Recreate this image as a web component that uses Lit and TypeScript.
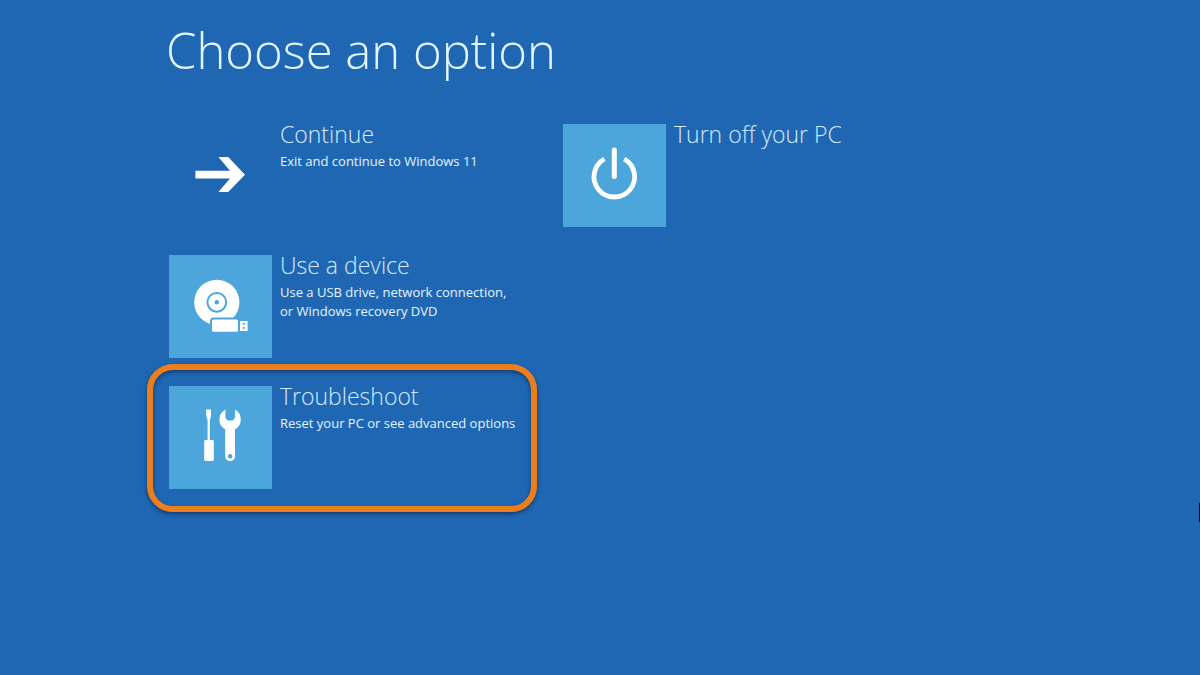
import { LitElement, html, css, svg, nothing, TemplateResult } from "lit";
import { customElement, property, state } from "lit/decorators.js";
import { classMap } from "lit/directives/class-map.js";

const icons: Record<string, TemplateResult> = {
  arrow: svg`<path fill="#fff" d="M26.4 46.8H61L49.4 33H59.2L76 50.7L59.2 68H49.4L61 54.4H26.4Z"/>`,
  power: svg`
    <path fill="none" stroke="#fff" stroke-width="4.8" stroke-linecap="butt"
      d="M41.4 35A20.3 20.3 0 1 0 61.2 35"/>
    <path fill="none" stroke="#fff" stroke-width="5" stroke-linecap="round" d="M51.3 26V52.4"/>`,
  device: svg`
    <circle cx="47.8" cy="47.3" r="22.6" fill="#fff"/>
    <circle cx="47.8" cy="47.3" r="9.4" fill="none" stroke="#4ca6dc" stroke-width="2"/>
    <circle cx="47.8" cy="47.3" r="2.2" fill="#4ca6dc"/>
    <path fill="#4ca6dc" d="M41 78V66.4Q41 62.6 44.8 62.6H76V78Z"/>
    <rect x="43" y="64.6" width="26" height="12.2" rx="1.6" fill="#fff"/>
    <path fill="#fff" fill-rule="evenodd" d="M71 66H78.6V76H71ZM73.6 68.2V69.8H76V68.2ZM73.6 72.2V73.8H76V72.2Z"/>`,
  tools: svg`
    <path fill="#fff" d="M37.2 23.4H42V30L40.8 34.2V54H43.4Q44.8 54 44.8 55.4V73.6Q44.8 75 43.4 75H36.6Q35.2 75 35.2 73.6V55.4Q35.2 54 36.6 54H38.6V34.2L37.2 30Z"/>
    <path fill="#fff" fill-rule="evenodd" d="M56.4 23.6Q50.4 27 50.4 33.6Q50.4 40.6 56.2 43.2V70.3A4.9 4.9 0 0 0 66 70.3V43.2Q71.8 40.6 71.8 33.6Q71.8 27 66 23.6V31.6L63.9 34.6H58.5L56.4 31.6ZM61.2 68A2.3 2.3 0 1 1 61.2 72.6A2.3 2.3 0 1 1 61.2 68Z"/>`,
};

@customElement("option-tile")
class OptionTile extends LitElement {
  @property() heading = "";
  @property({ attribute: false }) lines: string[] = [];
  @property() icon = "arrow";
  @property({ type: Boolean }) plain = false;
  @property({ type: Boolean }) marked = false;

  static styles = css`
    :host {
      display: block;
    }
    .tile {
      position: relative;
      display: flex;
      align-items: flex-start;
      gap: 8px;
      width: 100%;
      margin: 0;
      padding: 0;
      border: 0;
      background: none;
      color: #fff;
      font-family: "Open Sans", "Noto Sans", sans-serif;
      text-align: left;
      cursor: pointer;
    }
    .art {
      flex: none;
      width: 103px;
      height: 103px;
      background: #4ca6dc;
    }
    .plain .art {
      background: none;
    }
    .text {
      display: flex;
      flex-direction: column;
      gap: 8px;
      white-space: nowrap;
    }
    .heading {
      font-size: 23px;
      font-weight: 300;
      line-height: 20px;
      color: #d3ebff;
    }
    .detail {
      font-size: 13px;
      line-height: 19px;
      color: #e6f4ff;
    }
    .line {
      display: block;
    }
    .ring {
      position: absolute;
      inset: -22px -2px -23px -22px;
      border: 6px solid #ec7f1c;
      border-radius: 26px;
      box-shadow: 0 2px 4px rgba(0, 20, 60, 0.55), inset 0 2px 4px rgba(0, 20, 60, 0.5);
      pointer-events: none;
    }
  `;

  render() {
    return html`
      <button type="button" class=${classMap({ tile: true, plain: this.plain })}>
        <svg class="art" viewBox="0 0 103 103" aria-hidden="true">${icons[this.icon]}</svg>
        <span class="text">
          <span class="heading">${this.heading}</span>
          ${this.lines.length
            ? html`<span class="detail">${this.lines.map((l) => html`<span class="line">${l}</span>`)}</span>`
            : nothing}
        </span>
        ${this.marked ? html`<span class="ring"></span>` : nothing}
      </button>
    `;
  }
}

@customElement("app-root")
class AppRoot extends LitElement {
  @state() private options = [
    { heading: "Continue", lines: ["Exit and continue to Windows 11"], icon: "arrow", plain: true, marked: false },
    { heading: "Turn off your PC", lines: [], icon: "power", plain: false, marked: false },
    {
      heading: "Use a device",
      lines: ["Use a USB drive, network connection,", "or Windows recovery DVD"],
      icon: "device",
      plain: false,
      marked: false,
    },
    {
      heading: "Troubleshoot",
      lines: ["Reset your PC or see advanced options"],
      icon: "tools",
      plain: false,
      marked: true,
    },
  ];

  static styles = css`
    :host {
      display: block;
      position: relative;
      box-sizing: border-box;
      min-height: 100vh;
      padding: 20px 24px 24px 169px;
      overflow: hidden;
      background: #1f67b2;
      font-family: "Open Sans", "Noto Sans", sans-serif;
    }
    .title {
      margin: 0 0 44px -3px;
      font-size: 49px;
      font-weight: 300;
      line-height: 60px;
      color: #e2f6ff;
    }
    .options {
      display: grid;
      grid-template-columns: repeat(auto-fit, 366px);
      gap: 28px;
    }
    .wrap {
      max-width: 800px;
    }
    .first {
      grid-column: 1;
    }
    .caret {
      position: absolute;
      right: 0;
      top: 503px;
      width: 1px;
      height: 19px;
      background: #00040f;
    }
  `;

  render() {
    return html`
      <main class="wrap">
        <h1 class="title">Choose an option</h1>
        <div class="options">
          ${this.options.map(
            (o, i) => html`<option-tile
              class=${classMap({ first: i !== 1 })}
              .heading=${o.heading}
              .lines=${o.lines}
              .icon=${o.icon}
              .plain=${o.plain}
              .marked=${o.marked}
            ></option-tile>`
          )}
        </div>
      </main>
      <span class="caret"></span>
    `;
  }
}
